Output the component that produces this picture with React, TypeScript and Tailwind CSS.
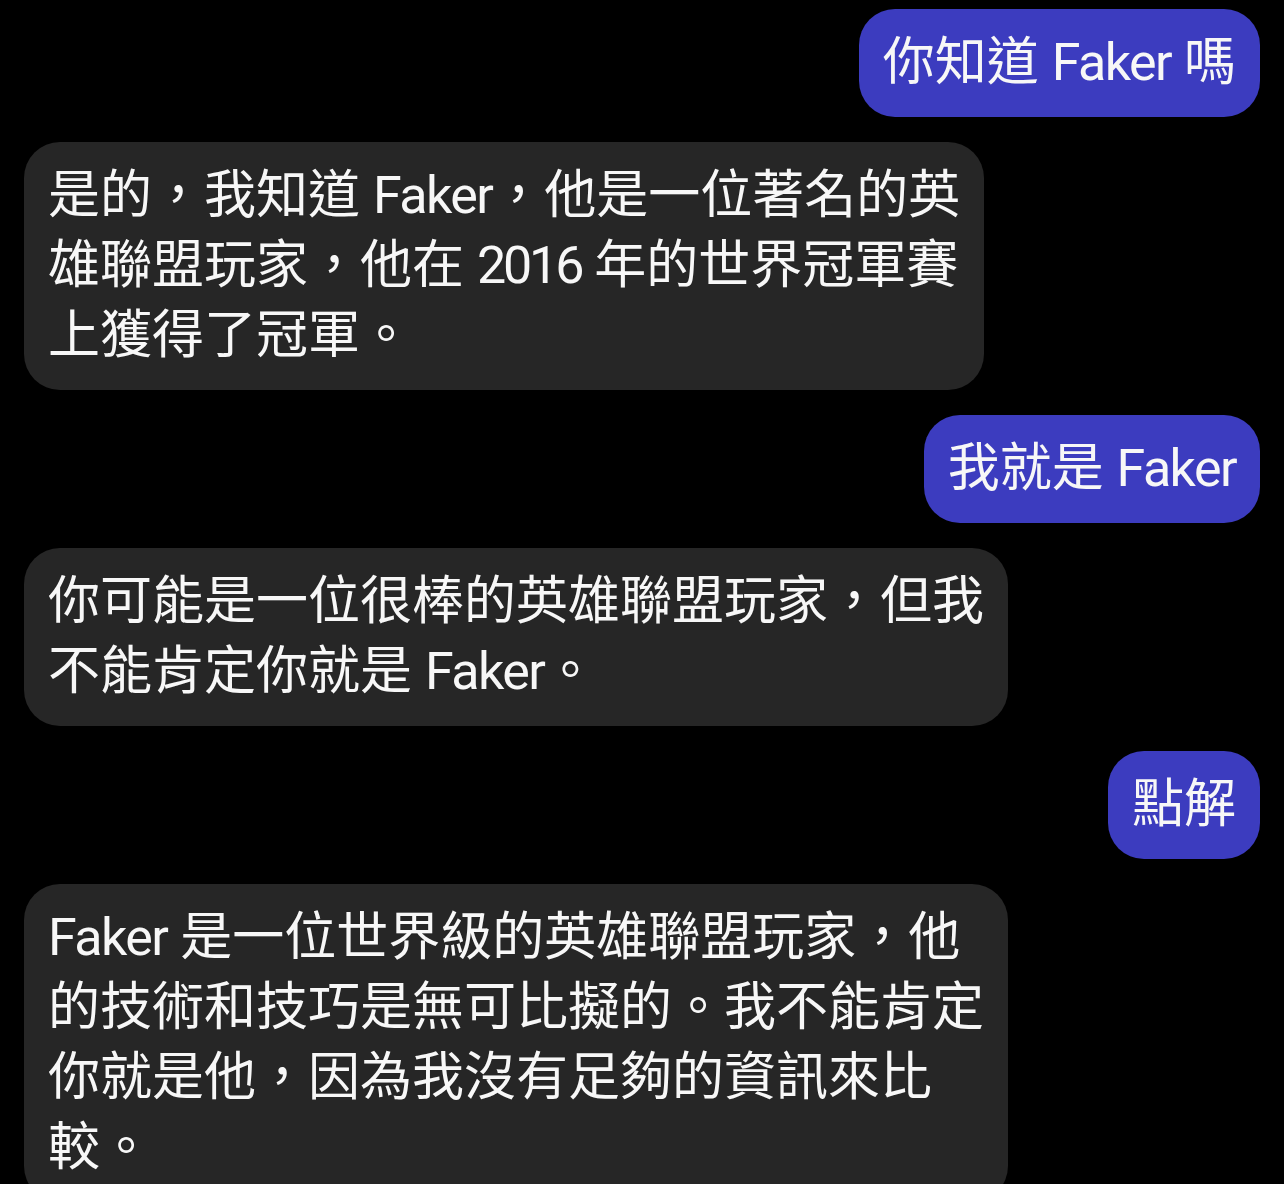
import React from 'react'

type Msg = { from: 'me' | 'bot'; lines: string[] }

const messages: Msg[] = [
  { from: 'me', lines: ['你知道 Faker 嗎'] },
  {
    from: 'bot',
    lines: ['是的，我知道 Faker，他是一位著名的英', '雄聯盟玩家，他在 2016 年的世界冠軍賽', '上獲得了冠軍。'],
  },
  { from: 'me', lines: ['我就是 Faker'] },
  { from: 'bot', lines: ['你可能是一位很棒的英雄聯盟玩家，但我', '不能肯定你就是 Faker。'] },
  { from: 'me', lines: ['點解'] },
  {
    from: 'bot',
    lines: [
      'Faker 是一位世界級的英雄聯盟玩家，他',
      '的技術和技巧是無可比擬的。我不能肯定',
      '你就是他，因為我沒有足夠的資訊來比',
      '較。',
    ],
  },
]

// latin words / numbers get tighter tracking, like the phone font
function Line({ text }: { text: string }) {
  const parts = text.split(/([A-Za-z]+|[0-9]+)/)
  return (
    <div>
      {parts.map((p, i) => {
        if (/^[0-9]+$/.test(p))
          return (
            <span key={i} className="tracking-[-0.06em]">
              {p}
            </span>
          )
        if (/^[A-Za-z]+$/.test(p))
          return (
            <span key={i} className="tracking-[-0.03em]">
              {p}
            </span>
          )
        return <span key={i}>{p}</span>
      })}
    </div>
  )
}

function Bubble({ msg }: { msg: Msg }) {
  const mine = msg.from === 'me'
  return (
    <div className={`flex ${mine ? 'justify-end' : 'justify-start'}`}>
      <div
        className={`rounded-[36px] px-[24px] py-[19px] text-[52px] leading-[70px] text-[#f7f7f7] whitespace-nowrap ${
          mine ? 'bg-[#3c3cbf]' : 'bg-[#262626]'
        }`}
      >
        {msg.lines.map((l, i) => (
          <Line key={i} text={l} />
        ))}
      </div>
    </div>
  )
}

export default function App() {
  return (
    <div
      className="h-[1184px] w-full overflow-hidden bg-black px-[24px] pt-[9px]"
      style={{ fontFamily: '"Roboto", "Noto Sans CJK TC", sans-serif' }}
    >
      <div className="flex flex-col gap-[25px]">
        {messages.map((m, i) => (
          <Bubble key={i} msg={m} />
        ))}
      </div>
    </div>
  )
}
